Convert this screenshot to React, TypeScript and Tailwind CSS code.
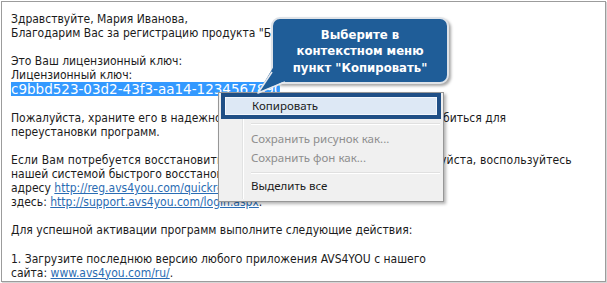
export default function App() {
  const body = { fontFamily: '"DejaVu Sans Condensed", "DejaVu Sans", sans-serif' };
  const ui = { fontFamily: '"Noto Sans", "Open Sans", sans-serif' };

  return (
    <div className="relative w-[607px] h-[283px] bg-white overflow-hidden">
      {/* email frame */}
      <div className="pl-px pt-px">
        <div
          className="w-[605px] h-[281px] border border-[#9c9c9c] shadow-[1px_1px_0_#d6d6d6] pl-[9px] pt-[10px] text-[12px] leading-[14.1px] text-[#1b1b1b] whitespace-nowrap"
          style={body}
        >
          <div>Здравствуйте, Мария Иванова,</div>
          <div>Благодарим Вас за регистрацию продукта "Бесплатно".</div>
          <div className="h-[14.1px]" />
          <div>Это Ваш лицензионный ключ:</div>
          <div>Лицензионный ключ:</div>
          <div>
            <span
              className="inline-block w-[269px] overflow-hidden bg-[#3399ff] text-white text-[13.5px] leading-[14px] align-top"
              style={{ fontFamily: '"DejaVu Sans", sans-serif' }}
            >
              c9bbd523-03d2-43f3-aa14-1234567890
            </span>
          </div>
          <div className="h-[14.1px]" />
          <div>Пожалуйста, храните его в надежном месте. Этот ключ может вам понадобиться для</div>
          <div>переустановки программ.</div>
          <div className="h-[14.1px]" />
          <div className="tracking-[0.12px]">
            Если Вам потребуется восстановить свой лицензионный ключ, то, пожалуйста, воспользуйтесь
          </div>
          <div>нашей системой быстрого восстановления</div>
          <div>
            адресу{" "}
            <a className="text-[#2a6cb3] underline">http://reg.avs4you.com/quickrecovery.aspx</a>
          </div>
          <div>
            здесь: <a className="text-[#2a6cb3] underline">http://support.avs4you.com/login.aspx</a>.
          </div>
          <div className="h-[14.1px]" />
          <div>Для успешной активации программ выполните следующие действия:</div>
          <div className="h-[14.1px]" />
          <div>1. Загрузите последнюю версию любого приложения AVS4YOU с нашего</div>
          <div>
            сайта: <a className="text-[#2a6cb3] underline">www.avs4you.com/ru/</a>.
          </div>
        </div>
      </div>

      {/* context menu */}
      <div
        className="absolute left-[218px] top-[92px] w-[226px] h-[110px] border border-[#979797] bg-[#f0f0f0] shadow-[2px_2px_3px_rgba(0,0,0,0.3)] text-[11.5px] text-[#1b1b1b]"
        style={ui}
      >
        <div className="absolute left-[23px] top-[2px] bottom-[2px] w-[2px] border-l border-[#e2e3e3] border-r border-r-white" />
        <div className="relative flex flex-col">
          <div className="mx-[2px] h-[26px] border-4 border-[#1f4f86] bg-[#dde8f5] shadow-[inset_0_0_0_1px_#f3f7fc] flex items-center pl-[27px]">
            Копировать
          </div>
          <div className="h-[11px] pt-[4px] pl-[32px] pr-[3px]">
            <div className="h-[2px] border-t border-[#e0e0e0] border-b border-b-white" />
          </div>
          <div className="h-[18px] flex items-center pl-[32px] text-[#8e8e8e]">Сохранить рисунок как...</div>
          <div className="h-[19px] flex items-center pl-[32px] text-[#8e8e8e]">Сохранить фон как...</div>
          <div className="h-[10px] pt-[5px] pl-[32px] pr-[3px]">
            <div className="h-[2px] border-t border-[#e0e0e0] border-b border-b-white" />
          </div>
          <div className="h-[18px] flex items-center pl-[32px]">Выделить все</div>
        </div>
      </div>

      {/* callout */}
      <div
        className="absolute left-[271px] top-[17px] w-[178px] h-[67px] rounded-[9px] border-2 border-[#dfe3e8] bg-[#1f5d98] shadow-[2px_2px_3px_rgba(0,0,0,0.35)] flex flex-col items-center justify-center pt-[2px] text-white font-bold text-[13px] leading-[16.5px]"
        style={body}
      >
        <div>Выберите в</div>
        <div>контекстном меню</div>
        <div>пункт "Копировать"</div>
      </div>
      <svg className="absolute left-[255px] top-[60px]" width="40" height="40" viewBox="0 0 40 40">
        <polygon points="19,6 3,33 32,20 32,6" fill="#1f5d98" />
        <polyline points="17,12 3,33 30,22" fill="none" stroke="#e6e9ee" strokeWidth="1.6" strokeLinejoin="round" />
      </svg>
    </div>
  );
}
